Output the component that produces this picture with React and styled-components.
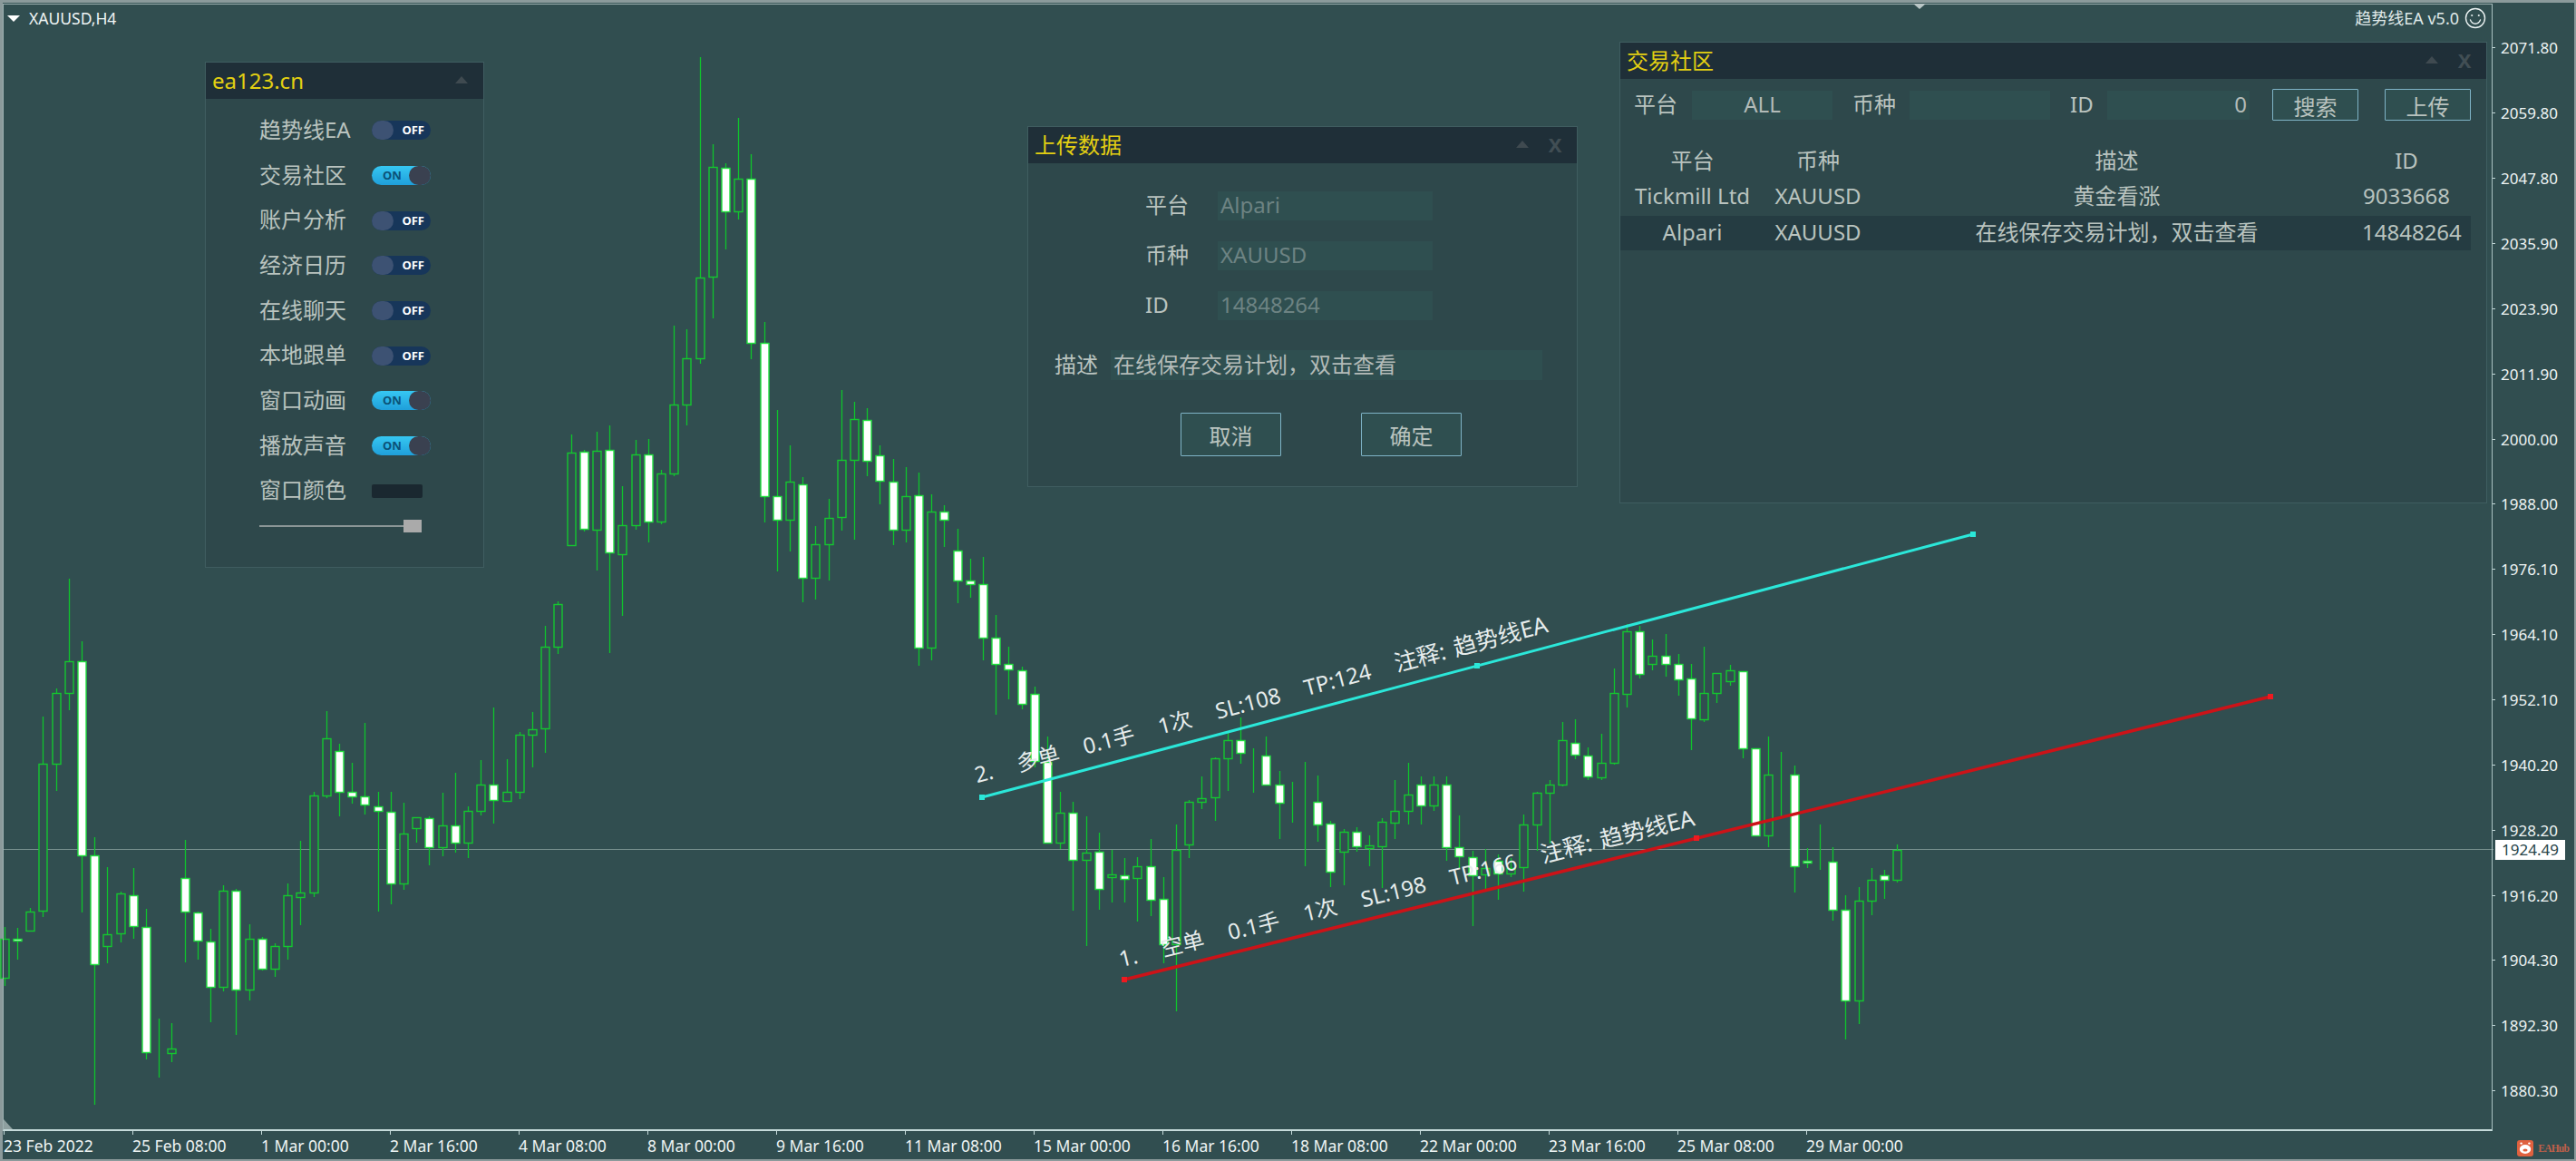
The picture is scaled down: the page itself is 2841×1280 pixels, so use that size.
import React from "react";
import styled, { createGlobalStyle } from "styled-components";

const FONT = `"Noto Sans", "Noto Sans CJK SC", sans-serif`;

const GlobalStyle = createGlobalStyle`
  html, body { margin: 0; padding: 0; background: #314e50; }
  * { box-sizing: border-box; }
`;

/* candle data: [wick high, body top, body bottom, wick low, filled] measured per chart section */
const sections = [
  { first: 0, offset: 620, scale: 2.376, rows: [
    [955,987,1088,1110,0],[957,987,991,1040,1],[905,914,965,968,0],[405,528,913,928,0],[330,343,528,598,0],
    [43,260,342,387,0],[207,260,767,916,1],[720,767,1052,1420,1],[798,973,1005,1050,0],[862,868,972,995,0],
    [801,872,953,985,1],[907,954,1284,1303,1],[1195,1286,1286,1350,0],[1207,1274,1286,1310,0],[726,826,915,1047,1],
    [915,916,991,1040,1],[960,992,1111,1205,1],[845,861,1111,1124,0],[855,859,1118,1237,1],[948,987,1118,1148,0],
    [982,987,1065,1070,1],[997,1004,1065,1087,0],[840,873,1005,1040,0],[729,866,876,950,0],[600,610,865,877,0],
    [390,462,610,617,0],[475,495,600,665,1],[526,600,612,632,1],[421,613,635,660,1],[600,638,652,914,1],
    [600,653,842,895,1],[630,711,842,858,0],[668,668,697,733,0],[665,669,747,793,1],[604,690,747,770,0],
    [552,690,733,760,1],[640,652,733,775,0],[518,582,650,662,0],[380,583,622,684,1],[515,600,624,625,0],
    [445,452,600,620,0],[392,438,452,537,0],[167,220,435,498,0],[103,110,220,240,0],
  ]},
  { first: 44, offset: 40, scale: 2.178, rows: [
    [957,999,1222,1222,0],[993,997,1183,1190,1],[950,995,1185,1282,0],[935,994,1240,1480,1],[1080,1175,1243,1392,0],
    [970,1005,1175,1184,0],[967,1005,1165,1215,1],[1042,1050,1166,1172,0],[695,885,1050,1056,0],[703,773,885,934,0],
    [50,580,773,787,0],[260,313,578,678,0],[305,316,421,512,1],[195,343,421,441,0],[284,343,737,775,1],
    [686,737,1105,1167,1],[898,1104,1160,1285,1],[982,1069,1160,1238,0],[1058,1075,1300,1360,1],[1177,1220,1301,1352,0],
    [1111,1157,1220,1307,0],[850,1017,1154,1186,0],[878,920,1017,1208,0],[892,921,1020,1057,1],[983,1006,1068,1124,1],
    [1016,1069,1185,1222,1],[1034,1105,1185,1215,0],[1047,1102,1467,1512,1],[1100,1142,1468,1498,0],[1127,1142,1161,1226,1],
    [1183,1235,1306,1362,1],[1255,1307,1316,1348,1],[1250,1316,1445,1498,1],
  ]},
  { first: 77, offset: 540, scale: 2.613, rows: [
    [360,427,501,647,1],[452,503,517,604,1],[510,519,617,632,1],[568,589,780,800,1],[712,783,1016,1018,1],
    [870,929,1017,1035,0],[900,929,1067,1212,1],[940,1044,1067,1315,0],[988,1043,1150,1210,1],[1037,1108,1116,1190,0],
    [1060,1110,1120,1190,1],[1058,1084,1118,1245,0],[1005,1085,1180,1228,1],[1115,1178,1308,1365,1],[963,1037,1310,1503,0],
    [893,898,1021,1060,0],[825,888,900,920,0],[770,773,887,955,0],[700,720,774,868,0],[655,720,759,790,1],
    [745,759,759,873,0],[712,765,850,850,1],[810,848,901,1005,1],[842,903,903,958,0],[785,902,902,1085,0],
    [824,899,963,1013,1],[955,961,1100,1145,1],[978,984,1043,1140,0],[972,985,1028,1043,1],[995,1025,1031,1085,0],
    [945,957,1026,1148,0],[835,924,960,1005,0],[787,877,924,965,0],[825,848,910,965,1],[825,848,910,925,0],
    [825,850,1030,1068,1],[938,1029,1055,1090,1],[1040,1058,1110,1258,1],[1035,1090,1108,1150,0],[1050,1070,1105,1182,1],
    [1060,1090,1105,1115,0],[935,963,1088,1158,0],[870,873,963,1040,0],[835,850,873,1020,0],[668,720,850,855,0],
    [660,730,763,775,1],[742,765,825,835,1],
  ]},
  { first: 124, offset: 640, scale: 2.904, rows: [
    [490,585,630,640,0],[282,360,585,590,0],[140,162,364,407,0],[145,162,300,315,1],[190,240,268,287,0],
    [170,240,268,307,1],[235,268,317,370,1],[267,315,442,542,1],[212,360,443,452,0],[295,295,361,393,0],
    [270,288,323,338,0],[290,290,538,568,1],[538,538,817,817,1],[500,622,817,853,0],[550,622,622,760,0],
    [593,622,914,998,1],[857,896,902,920,1],[782,901,901,925,0],[855,901,1055,1090,1],[1008,1054,1346,1468,1],
    [982,1025,1346,1420,0],[920,957,1026,1073,0],[926,944,958,1018,1],[845,863,958,968,0],
  ]},
];

const candles = sections.flatMap(({ first, offset, scale, rows }) =>
  rows.map(([hi, top, bot, lo, filled], n) => {
    const y = (v) => Math.round(offset + v / scale);
    return { x: Math.round(4.85 + 14.2 * (first + n)), hi: y(hi), top: y(top), bot: y(bot), lo: y(lo), filled: !!filled };
  })
);

const prices = ["2071.80","2059.80","2047.80","2035.90","2023.90","2011.90","2000.00","1988.00","1976.10","1964.10","1952.10","1940.20","1928.20","1916.20","1904.30","1892.30","1880.30"];
const times = ["23 Feb 2022","25 Feb 08:00","1 Mar 00:00","2 Mar 16:00","4 Mar 08:00","8 Mar 00:00","9 Mar 16:00","11 Mar 08:00","15 Mar 00:00","16 Mar 16:00","18 Mar 08:00","22 Mar 00:00","23 Mar 16:00","25 Mar 08:00","29 Mar 00:00"];
const switches = [["趋势线EA",false],["交易社区",true],["账户分析",false],["经济日历",false],["在线聊天",false],["本地跟单",false],["窗口动画",true],["播放声音",true]];

const Page = styled.div`
  position: relative;
  width: 2841px;
  height: 1280px;
  overflow: hidden;
  padding: 4px 2px 2px 3px;
  display: grid;
  grid-template-columns: 2746px 1fr;
  grid-template-rows: 1243px 1fr;
  background: #314e50;
  font-family: ${FONT};
  box-shadow: inset 3px 3px 0 #8b9a9b, inset -2px -2px 0 #8b9a9b;
`;

const Chart = styled.main`
  position: relative;
  display: flex;
  justify-content: space-between;
  align-items: flex-start;
  padding: 2px 6px 0 4px;
  border-top: 1px solid #9fb2b2;
  border-left: 1px solid #9fb2b2;
  border-right: 1px solid #a9c2c2;
  border-bottom: 2px solid #c5dada;
`;

const ChartSymbol = styled.div`
  display: flex;
  align-items: center;
  gap: 10px;
  color: #eef4f4;
  font-size: 17.5px;
  line-height: 26px;
  z-index: 1;
`;

const MenuCaret = styled.span`
  width: 0;
  height: 0;
  border-left: 7px solid transparent;
  border-right: 7px solid transparent;
  border-top: 7px solid #ffffff;
`;

const EaBadge = styled.div`
  display: flex;
  align-items: center;
  gap: 6px;
  color: #dfe8e8;
  font-size: 18px;
  line-height: 26px;
  z-index: 1;
`;

const ShiftMarker = styled.span`
  position: absolute;
  left: 2106px;
  top: -1px;
  width: 0;
  height: 0;
  border-left: 7px solid transparent;
  border-right: 7px solid transparent;
  border-top: 6px solid #b9c6c6;
`;

const ScaleCorner = styled.span`
  position: absolute;
  left: 0;
  bottom: 0;
  width: 10px;
  height: 11px;
  background: #8ea0a0;
  clip-path: polygon(0 0, 100% 100%, 0 100%);
`;

const ChartArt = styled.svg`
  position: absolute;
  left: 0;
  top: 0;
`;

const PriceAxis = styled.aside`
  display: flex;
  flex-direction: column;
  padding-top: 13px;
`;

const PriceRow = styled.div`
  display: flex;
  align-items: center;
  gap: 6px;
  height: 71.86px;
  flex: none;
  color: #eef4f4;
  font-size: 17px;
  &::before {
    content: "";
    width: 3px;
    height: 1px;
    background: #c5dada;
  }
`;

const PriceTag = styled.div`
  position: absolute;
  left: 2752px;
  top: 926px;
  width: 77px;
  height: 22px;
  padding-left: 7px;
  background: #ffffff;
  color: #28454a;
  font-size: 17px;
  line-height: 22px;
`;

const Footer = styled.footer`
  grid-column: 1 / -1;
  display: flex;
  align-items: flex-start;
  justify-content: space-between;
  padding: 0 6px 0 1px;
`;

const TimeAxis = styled.div`
  display: flex;
`;

const TimeCell = styled.div`
  width: 142px;
  padding-top: 3px;
  color: #eef4f4;
  font-size: 17.5px;
  line-height: 26px;
  background: linear-gradient(#c5dada, #c5dada) 0 0 / 1px 4px no-repeat;
`;

const HubMark = styled.div`
  display: flex;
  align-items: center;
  gap: 5px;
  margin-top: 10px;
  color: #c0604a;
  font: bold 11.5px "Liberation Serif", serif;
  letter-spacing: -0.8px;
`;

const Window = styled.section`
  position: absolute;
  left: ${(p) => p.$left}px;
  top: ${(p) => p.$top}px;
  width: ${(p) => p.$width}px;
  height: ${(p) => p.$height}px;
  display: flex;
  flex-direction: column;
  background: #2e484b;
  border: 1px solid #3f5d60;
  color: #b9c3bf;
  font-size: 24px;
`;

const TitleBar = styled.header`
  flex: none;
  height: 40px;
  display: flex;
  align-items: center;
  justify-content: space-between;
  padding: 0 6px 0 7px;
  background: #1f2f38;
`;

const Title = styled.h2`
  margin: 0;
  color: #e3cf12;
  font-size: 24px;
  font-weight: 400;
  line-height: 38px;
`;

const TitleControls = styled.div`
  display: flex;
`;

const ControlSlot = styled.span`
  width: 36px;
  display: flex;
  align-items: center;
  justify-content: center;
  padding-bottom: 2px;
  color: #414e54;
  font-size: 22px;
  font-weight: 700;
  line-height: 22px;
`;

const CollapseArrow = styled.span`
  width: 0;
  height: 0;
  border-left: 7px solid transparent;
  border-right: 7px solid transparent;
  border-bottom: 8px solid #3f4a50;
`;

const SettingsList = styled.div`
  display: flex;
  flex-direction: column;
  padding: 10px 0 0 59px;
`;

const SettingRow = styled.div`
  display: flex;
  align-items: center;
  height: 49.7px;
`;

const SettingLabel = styled.span`
  width: 124px;
  white-space: nowrap;
  line-height: 30px;
  padding-bottom: 2px;
`;

const Toggle = styled.span`
  width: 65px;
  height: 21px;
  display: flex;
  align-items: center;
  justify-content: space-between;
  border-radius: 11px;
  background: ${(p) => (p.$on ? "linear-gradient(#36c7f2, #1f9fda)" : "#17365a")};
  color: ${(p) => (p.$on ? "#0b5278" : "#ffffff")};
  font-size: 13px;
  font-weight: 700;
  line-height: 21px;
  padding-left: ${(p) => (p.$on ? "12px" : "0")};
  padding-right: ${(p) => (p.$on ? "0" : "7px")};
`;

const ToggleKnob = styled.i`
  width: 24px;
  height: 21px;
  border-radius: 11px;
  background: ${(p) => (p.$on ? "#3a4150" : "#3d5273")};
`;

const ColorSwatch = styled.span`
  width: 56px;
  height: 15px;
  border-radius: 2px;
  background: #1a2830;
`;

const Slider = styled.div`
  width: 179px;
  height: 14px;
  margin-top: 7px;
  display: flex;
  justify-content: flex-end;
  background: linear-gradient(#8b9696, #8b9696) 0 6px / 100% 2px no-repeat;
`;

const SliderThumb = styled.span`
  width: 20px;
  height: 14px;
  background: #aaaaaa;
`;

const FormGrid = styled.div`
  display: grid;
  grid-template-columns: 80px 237px;
  grid-auto-rows: 32px;
  row-gap: 23px;
  align-items: center;
  padding: 31px 0 0 129px;
`;

const FieldLabel = styled.label`
  height: 32px;
  line-height: 29px;
  white-space: nowrap;
`;

const Field = styled.div`
  height: ${(p) => p.$height || 32}px;
  width: ${(p) => (p.$width ? `${p.$width}px` : "auto")};
  padding: 0 3px;
  background: #2f4f50;
  color: ${(p) => p.$color || "#6d8383"};
  text-align: ${(p) => p.$align || "left"};
  line-height: ${(p) => (p.$height || 32) - 2}px;
  white-space: nowrap;
`;

const NoteRow = styled.div`
  display: flex;
  align-items: center;
  gap: 14px;
  padding: 33px 0 0 29px;
`;

const ButtonRow = styled.div`
  display: flex;
  gap: 88px;
  padding: 36px 0 0 168px;
`;

const Button = styled.button`
  width: ${(p) => p.$width}px;
  height: ${(p) => p.$height}px;
  padding: 0;
  background: #2f4f50;
  border: 1px solid #7fb4c7;
  border-radius: 1px;
  color: #b9c3bf;
  font: 24px ${FONT};
`;

const SearchBar = styled.div`
  display: grid;
  grid-template-columns: 64px 155px 22px 63px 155px 22px 41px 157px 25px 95px 29px 95px;
  align-items: center;
  padding: 11px 0 0 15px;
`;

const SearchLabel = styled(FieldLabel)`
  grid-column: ${(p) => p.$col};
`;

const SearchField = styled(Field)`
  grid-column: ${(p) => p.$col};
`;

const SearchButton = styled(Button)`
  grid-column: ${(p) => p.$col};
`;

const Table = styled.div`
  display: flex;
  flex-direction: column;
  padding-top: 23px;
`;

const TableRow = styled.div`
  display: grid;
  grid-template-columns: 159px 118px 541px 98px;
  width: 938px;
  height: 38px;
  margin-top: 2px;
  align-items: center;
  text-align: center;
  line-height: 36px;
  padding-bottom: ${(p) => (p.$head ? 0 : 2)}px;
  white-space: nowrap;
  background: ${(p) => (p.$selected ? "#253c42" : "transparent")};
`;

const LineLabel = styled.div`
  position: absolute;
  left: ${(p) => p.$x}px;
  top: ${(p) => p.$y - 32}px;
  height: 32px;
  line-height: 32px;
  color: #e6ecec;
  font-size: 24px;
  white-space: pre;
  word-spacing: 3px;
  transform-origin: 0 100%;
  transform: rotate(${(p) => p.$angle}deg);
`;

const LineNote = styled.span`
  font-size: 25.4px;
`;

const Candle = ({ c }) => {
  const green = c.filled ? "#22e03f" : "#14c72f";
  return (
    <g>
      <line x1={c.x + 0.5} x2={c.x + 0.5} y1={c.hi} y2={c.lo} stroke="#0fc42c" strokeWidth="1.3" />
      <rect
        x={c.x - 4}
        y={c.top + 0.5}
        width={9}
        height={Math.max(c.bot - c.top, 0)}
        fill={c.filled ? "#ffffff" : "#314e50"}
        stroke={green}
        strokeWidth="1.4"
      />
    </g>
  );
};

const ChartDrawing = () => (
  <ChartArt width="2841" height="1280" viewBox="0 0 2841 1280">
    <line x1="4" x2="2750" y1="936.5" y2="936.5" stroke="#78918f" strokeWidth="1" />
    {candles.map((c) => (
      <Candle key={c.x} c={c} />
    ))}
    <line x1="1083" y1="879" x2="2176" y2="589" stroke="#2be7d9" strokeWidth="3" />
    <rect x="1080" y="876" width="6" height="6" fill="#2be7d9" />
    <rect x="1626" y="731" width="6" height="6" fill="#2be7d9" />
    <rect x="2173" y="586" width="6" height="6" fill="#2be7d9" />
    <line x1="1240" y1="1080" x2="2504" y2="768" stroke="#cc1318" strokeWidth="3.6" />
    <rect x="1237" y="1077" width="6" height="6" fill="#ee1a20" />
    <rect x="1868" y="921" width="6" height="6" fill="#ee1a20" />
    <rect x="2501" y="765" width="6" height="6" fill="#ee1a20" />
  </ChartArt>
);

const Smiley = () => (
  <svg width="24" height="24" viewBox="0 0 24 24" fill="none" stroke="#eaf1f1" strokeWidth="1.4">
    <circle cx="12" cy="12" r="10.5" />
    <circle cx="8.2" cy="9" r="1.1" fill="#eaf1f1" stroke="none" />
    <circle cx="15.8" cy="9" r="1.1" fill="#eaf1f1" stroke="none" />
    <path d="M6.5 14c1.2 3 3.2 4.2 5.5 4.2s4.3-1.2 5.5-4.2" strokeLinecap="round" />
  </svg>
);

const HubLogo = () => (
  <svg width="18" height="18" viewBox="0 0 18 18">
    <rect width="18" height="18" rx="3" fill="#e0613f" />
    <circle cx="4.6" cy="3.6" r="1.2" fill="#fff" />
    <circle cx="13.4" cy="3.6" r="1.2" fill="#fff" />
    <ellipse cx="9" cy="10" rx="6.2" ry="5" fill="#fff" />
    <ellipse cx="9" cy="11" rx="2.6" ry="1.6" fill="#e0613f" />
  </svg>
);

const WindowHeader = ({ title, closable }) => (
  <TitleBar>
    <Title>{title}</Title>
    <TitleControls>
      <ControlSlot><CollapseArrow /></ControlSlot>
      {closable && <ControlSlot>X</ControlSlot>}
    </TitleControls>
  </TitleBar>
);

const SettingsWindow = () => (
  <Window $left={226} $top={68} $width={308} $height={558}>
    <WindowHeader title="ea123.cn" />
    <SettingsList>
      {switches.map(([label, on]) => (
        <SettingRow key={label}>
          <SettingLabel>{label}</SettingLabel>
          <Toggle $on={on}>
            {on ? <>ON<ToggleKnob $on /></> : <><ToggleKnob />OFF</>}
          </Toggle>
        </SettingRow>
      ))}
      <SettingRow>
        <SettingLabel>窗口颜色</SettingLabel>
        <ColorSwatch />
      </SettingRow>
      <Slider><SliderThumb /></Slider>
    </SettingsList>
  </Window>
);

const UploadWindow = () => (
  <Window $left={1133} $top={139} $width={607} $height={398}>
    <WindowHeader title="上传数据" closable />
    <FormGrid>
      <FieldLabel>平台</FieldLabel><Field>Alpari</Field>
      <FieldLabel>币种</FieldLabel><Field>XAUUSD</Field>
      <FieldLabel>ID</FieldLabel><Field>14848264</Field>
    </FormGrid>
    <NoteRow>
      <FieldLabel>描述</FieldLabel>
      <Field $width={476} $height={33} $color="#b3bbb8">在线保存交易计划，双击查看</Field>
    </NoteRow>
    <ButtonRow>
      <Button $width={111} $height={48}>取消</Button>
      <Button $width={111} $height={48}>确定</Button>
    </ButtonRow>
  </Window>
);

const CommunityWindow = () => (
  <Window $left={1786} $top={46} $width={957} $height={509}>
    <WindowHeader title="交易社区" closable />
    <SearchBar>
      <SearchLabel $col={1}>平台</SearchLabel>
      <SearchField $col={2} $color="#b3bbb8" $align="center">ALL</SearchField>
      <SearchLabel $col={4}>币种</SearchLabel>
      <SearchField $col={5} />
      <SearchLabel $col={7}>ID</SearchLabel>
      <SearchField $col={8} $color="#b3bbb8" $align="right">0</SearchField>
      <SearchButton $col={10} $width={95} $height={35}>搜索</SearchButton>
      <SearchButton $col={12} $width={95} $height={35}>上传</SearchButton>
    </SearchBar>
    <Table>
      <TableRow $head><span>平台</span><span>币种</span><span>描述</span><span>ID</span></TableRow>
      <TableRow><span>Tickmill Ltd</span><span>XAUUSD</span><span>黄金看涨</span><span>9033668</span></TableRow>
      <TableRow $selected><span>Alpari</span><span>XAUUSD</span><span>在线保存交易计划，双击查看</span><span>14848264</span></TableRow>
    </Table>
  </Window>
);

export default function App() {
  return (
    <>
      <GlobalStyle />
      <Page>
        <ChartDrawing />
        <Chart>
          <ChartSymbol><MenuCaret />XAUUSD,H4</ChartSymbol>
          <EaBadge>趋势线EA v5.0 <Smiley /></EaBadge>
          <ShiftMarker />
          <ScaleCorner />
        </Chart>
        <PriceAxis>
          {prices.map((p) => <PriceRow key={p}>{p}</PriceRow>)}
        </PriceAxis>
        <Footer>
          <TimeAxis>
            {times.map((t) => <TimeCell key={t}>{t}</TimeCell>)}
          </TimeAxis>
          <HubMark><HubLogo />EAHub</HubMark>
        </Footer>
        <PriceTag>1924.49</PriceTag>
        <LineLabel $x={1079} $y={869} $angle={-14.8}>{"2.   多单   0.1手   1次   SL:108   TP:124   "}<LineNote>注释: 趋势线EA</LineNote></LineLabel>
        <LineLabel $x={1238} $y={1072} $angle={-13.86}>{"1.   空单   0.1手   1次   SL:198   TP:166   "}<LineNote>注释: 趋势线EA</LineNote></LineLabel>
        <SettingsWindow />
        <UploadWindow />
        <CommunityWindow />
      </Page>
    </>
  );
}
